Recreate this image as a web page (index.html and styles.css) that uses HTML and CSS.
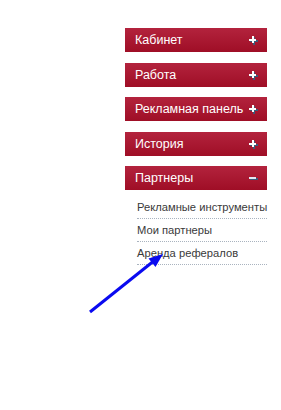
FILE: index.html
```html
<!DOCTYPE html>
<html lang="ru">
<head>
    <meta charset="UTF-8">
    <title>Меню</title>
    <link rel="stylesheet" href="styles.css">
</head>
<body>

    <div class="menu">
        <div class="menu-head">Кабинет
            <svg class="toggle" width="9" height="9" viewBox="0 0 9 9"><rect x="4" y="1" width="2" height="8" fill="#3b5a7a"/><rect x="1" y="4" width="8" height="2" fill="#3b5a7a"/><rect x="3" y="0" width="2" height="7" fill="#fff"/><rect x="0" y="3" width="7" height="2" fill="#fff"/></svg>
        </div>
        <div class="menu-head">Работа
            <svg class="toggle" width="9" height="9" viewBox="0 0 9 9"><rect x="4" y="1" width="2" height="8" fill="#3b5a7a"/><rect x="1" y="4" width="8" height="2" fill="#3b5a7a"/><rect x="3" y="0" width="2" height="7" fill="#fff"/><rect x="0" y="3" width="7" height="2" fill="#fff"/></svg>
        </div>
        <div class="menu-head">Рекламная панель
            <svg class="toggle" width="9" height="9" viewBox="0 0 9 9"><rect x="4" y="1" width="2" height="8" fill="#3b5a7a"/><rect x="1" y="4" width="8" height="2" fill="#3b5a7a"/><rect x="3" y="0" width="2" height="7" fill="#fff"/><rect x="0" y="3" width="7" height="2" fill="#fff"/></svg>
        </div>
        <div class="menu-head">История
            <svg class="toggle" width="9" height="9" viewBox="0 0 9 9"><rect x="4" y="1" width="2" height="8" fill="#3b5a7a"/><rect x="1" y="4" width="8" height="2" fill="#3b5a7a"/><rect x="3" y="0" width="2" height="7" fill="#fff"/><rect x="0" y="3" width="7" height="2" fill="#fff"/></svg>
        </div>
        <div class="menu-head">Партнеры
            <svg class="toggle" width="9" height="9" viewBox="0 0 9 9"><rect x="1" y="4" width="8" height="2" fill="#3b5a7a"/><rect x="0" y="3" width="7" height="2" fill="#e4e8f4"/></svg>
        </div>

        <ul class="submenu">
            <li><a href="#">Рекламные инструменты</a></li>
            <li><a href="#">Мои партнеры</a></li>
            <li><a href="#">Аренда рефералов</a></li>
        </ul>
    </div>

    <!-- стрелка-указатель -->
    <svg class="pointer" width="281" height="410" viewBox="0 0 281 410">
        <line x1="90" y1="312" x2="155" y2="260" stroke="#0a0af0" stroke-width="3"/>
        <polygon points="163,254 155.5,267 148.5,258.5" fill="#0a0af0"/>
    </svg>

</body>
</html>
```

FILE: styles.css
```css
body {
    margin: 0;
    background-color: #fff;
    font-family: 'Liberation Sans', Arial, sans-serif;
    position: relative;
    height: 410px;
}
.menu {
    width: 142px;
    margin-left: 125px;
    padding-top: 28px;
}
.menu-head {
    height: 24px;
    line-height: 24px;
    margin-bottom: 10.5px;
    padding: 0 9px 0 10px;
    display: flex;
    justify-content: space-between;
    align-items: center;
    color: #fff;
    font-size: 12.5px;
    background: linear-gradient(to bottom, #b3233d, #9f0e26); /* бордовый */
}
.toggle {
    display: block;
    margin-top: 1px;
}
.submenu {
    list-style: none;
    margin: -4.5px 0 0 12px;
    padding: 0;
}
.submenu li {
    height: 22px;
    line-height: 22px;
    border-bottom: 1px dotted #a9b3bf;
    font-size: 11.2px;
}
.submenu a {
    color: #3a3a3a;
    text-decoration: none;
    white-space: nowrap;
}
.pointer {
    position: absolute;
    left: 0;
    top: 0;
}
```
